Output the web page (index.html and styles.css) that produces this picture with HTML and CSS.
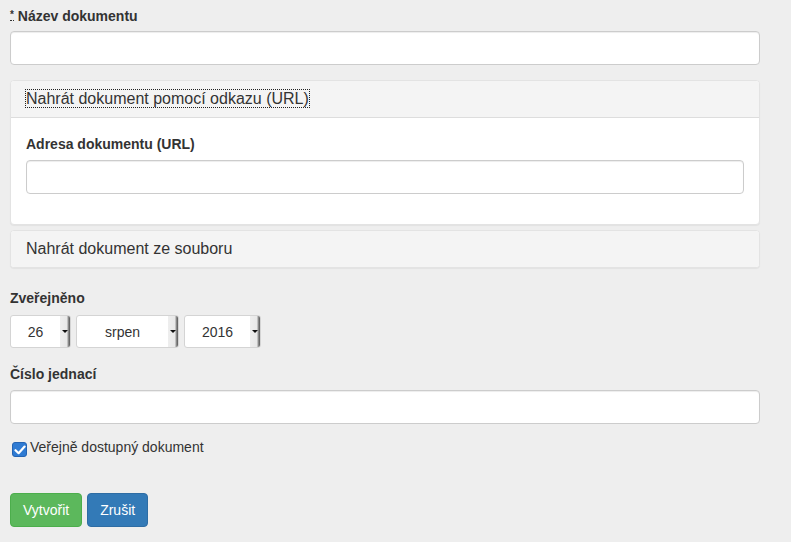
FILE: index.html
```html
<!DOCTYPE html>
<html lang="cs">
<head>
<meta charset="utf-8">
<link rel="stylesheet" href="styles.css">
</head>
<body>
<form class="form">
  <div class="group">
    <label class="label"><abbr class="req" title="povinné">*</abbr> Název dokumentu</label>
    <div class="input"></div>
  </div>

  <div class="panels">
    <div class="panel">
      <div class="panel-heading"><span class="focus">Nahrát dokument pomocí odkazu (URL)</span></div>
      <div class="panel-body">
        <label class="label">Adresa dokumentu (URL)</label>
        <div class="input"></div>
      </div>
    </div>
    <div class="panel">
      <div class="panel-heading">Nahrát dokument ze souboru</div>
    </div>
  </div>

  <div class="group group-date">
    <label class="label">Zveřejněno</label>
    <div class="selects">
      <div class="select s-day"><span class="val">26</span><span class="arrow"></span></div>
      <div class="select s-month"><span class="val">srpen</span><span class="arrow"></span></div>
      <div class="select s-year"><span class="val">2016</span><span class="arrow"></span></div>
    </div>
  </div>

  <div class="group group-ref">
    <label class="label">Číslo jednací</label>
    <div class="input"></div>
  </div>

  <div class="check">
    <span class="box"><svg width="12" height="10" viewBox="0 0 12 10"><path d="M1.5 5.2 L4.6 8.2 L10.6 1.6" fill="none" stroke="#fff" stroke-width="2.2" stroke-linecap="round" stroke-linejoin="round"/></svg></span>
    <span>Veřejně dostupný dokument</span>
  </div>

  <div class="actions">
    <button type="button" class="btn btn-success">Vytvořit</button>
    <button type="button" class="btn btn-primary">Zrušit</button>
  </div>
</form>
</body>
</html>
```

FILE: styles.css
```css
html, body {
  margin: 0;
  padding: 0;
  background: #eeeeee;
}
body {
  font-family: "Liberation Sans", Arial, Helvetica, sans-serif;
  font-size: 14px;
  line-height: 20px;
  color: #333333;
}
.form {
  width: 750px;
  padding: 6px 10px 0 10px;
}
.group {
  margin-bottom: 15px;
}
.label {
  display: block;
  font-weight: bold;
  margin-bottom: 5px;
  height: 20px;
}
.req {
  text-decoration: none;
  border-bottom: 1px dotted #333;
  font-size: 10px;
  cursor: help;
  position: relative;
  top: -3px;
}
.input {
  height: 32px;
  background: #fff;
  border: 1px solid #cccccc;
  border-radius: 4px;
  box-shadow: inset 0 1px 1px rgba(0,0,0,0.075);
}
.panels {
  margin-bottom: 20px;
}
.panel {
  background: #fff;
  border: 1px solid #e3e3e3;
  border-radius: 4px;
  box-shadow: 0 1px 1px rgba(0,0,0,0.05);
  margin-bottom: 5px;
}
.panel-heading {
  background: #f4f4f4;
  padding: 8px 15px 8px 15px;
  font-size: 16px;
  line-height: 20px;
  color: #333;
  border-radius: 3px;
}
.panel:first-child .panel-heading {
  border-bottom: 1px solid #dddddd;
  border-radius: 3px 3px 0 0;
}
.focus {
  outline: 1px dotted #222;
  outline-offset: 0;
}
.panel-body {
  padding: 15px 15px 30px 15px;
}
.panel-body .label {
  margin-bottom: 6px;
  margin-top: 1px;
}
.group-date {
  margin-bottom: 16px;
}
.group-ref .label {
  margin-bottom: 6px;
}
.selects {
  display: flex;
  gap: 5px;
  padding-top: 2px;
}
.select {
  box-sizing: border-box;
  height: 33px;
  background: #fff;
  border: 1px solid #d4d4d4;
  border-radius: 3px;
  display: flex;
  align-items: center;
  position: relative;
  overflow: hidden;
}
.val {
  flex: 1;
  text-align: center;
  color: #333;
}
.arrow {
  width: 10px;
  align-self: stretch;
  background: linear-gradient(to right, #eeeeee 0, #e8e8e8 7px, #9a9a9a 8px, #555 10px);
  position: relative;
}
.arrow::after {
  content: "";
  position: absolute;
  left: 2px;
  top: 14px;
  border-left: 3px solid transparent;
  border-right: 3px solid transparent;
  border-top: 3px solid #111;
}
.s-day { width: 61px; }
.s-month { width: 103px; }
.s-year { width: 77px; }
.check {
  display: flex;
  align-items: flex-start;
  gap: 3px;
  margin-top: -2px;
  padding-left: 2px;
  height: 40px;
}
.box {
  width: 15px;
  height: 15px;
  margin-top: 5px;
  background: #2f7bd3;
  border: 1px solid #2464b3;
  border-radius: 3px;
  box-sizing: border-box;
  display: flex;
  align-items: center;
  justify-content: center;
}
.actions {
  display: flex;
  gap: 5px;
  margin-top: 16px;
}
.btn {
  font-family: inherit;
  font-size: 14px;
  line-height: 20px;
  padding: 6px 12px;
  border: 1px solid transparent;
  border-radius: 4px;
  color: #fff;
  height: 34px;
  cursor: pointer;
}
.btn-success {
  background: #5cb85c;
  border-color: #4cae4c;
}
.btn-primary {
  background: #337ab7;
  border-color: #2e6da4;
}
```
